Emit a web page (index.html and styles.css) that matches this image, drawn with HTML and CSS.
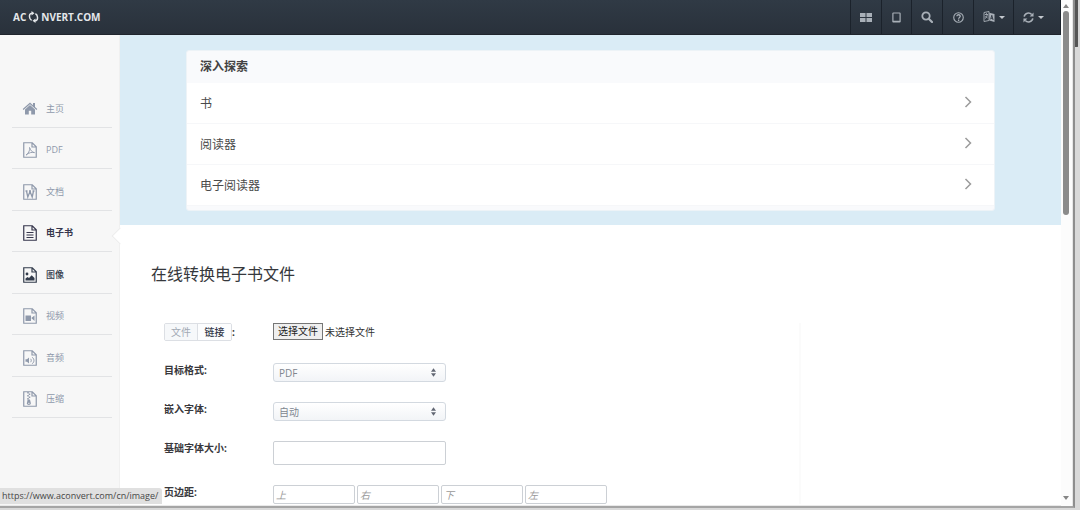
FILE: index.html
```html
<!DOCTYPE html>
<html lang="zh-CN">
<head>
<meta charset="utf-8">
<title>在线转换电子书文件</title>
<link rel="stylesheet" href="styles.css">
</head>
<body>
<svg class="defs" aria-hidden="true">
  <symbol id="page" viewBox="0 0 14 16"><path d="M.75.75h8.5l4 4v10.5H.75zM9 .75V5h4.25" fill="none" stroke="currentColor" stroke-width="1.2"/></symbol>
  <symbol id="chevron" viewBox="0 0 8 12"><path d="M1.500 1l5 5-5 5" fill="none" stroke="currentColor" stroke-width="1.5"/></symbol>
  <symbol id="updown" viewBox="0 0 6 10"><path d="M3 0l3 4H0zM0 6h6l-3 4z" fill="currentColor"/></symbol>
</svg>
<div class="window">
  <div class="view">
    <header class="topbar">
      <a class="logo" href="#" aria-label="ACONVERT.COM"><span>AC</span>
        <svg class="logo-icon" viewBox="0 0 12 12"><path d="M4.500 2.200C2.300 2.200 1.800 4 2 6c.2 1.600.9 2.700 2.100 3.400M7.500 9.800c2.200 0 2.700-1.800 2.500-3.800-.2-1.600-.9-2.700-2.100-3.400" fill="none" stroke="currentColor" stroke-width="1.500"/><path d="M4 0v4.400L7 2.200zM8 12V7.600L5 9.800z" fill="currentColor"/></svg>
        <span>NVERT.COM</span></a>
      <div class="tools">
        <button class="tool" aria-label="网格"><svg viewBox="0 0 12 10" width="12" height="10"><path d="M0 1h5.500v4H0zM6.500 1H12v4H6.500zM0 6h5.500v4H0zM6.500 6H12v4H6.500z" fill="currentColor"/></svg></button>
        <button class="tool narrow" aria-label="平板"><svg viewBox="0 0 10 12" width="9" height="11"><rect x="1" y="1" width="8" height="10" rx=".6" fill="none" stroke="currentColor" stroke-width="1.300"/><path d="M1 9.600h8v1.400H1z" fill="currentColor"/></svg></button>
        <button class="tool" aria-label="搜索"><svg viewBox="0 0 12 12" width="12" height="12"><circle cx="5" cy="5" r="3.700" fill="none" stroke="currentColor" stroke-width="1.800"/><path d="M7.700 7.700l3.300 3.300" stroke="currentColor" stroke-width="2.200" stroke-linecap="round"/></svg></button>
        <button class="tool" aria-label="帮助"><svg viewBox="0 0 12 12" width="11" height="11"><circle cx="6" cy="6" r="5.200" fill="none" stroke="currentColor" stroke-width="1.200"/><path d="M4.200 4.700c0-2.300 3.700-2.200 3.700 0C7.900 6 6.100 5.900 6.100 7.400M6.100 8.200v1.500" fill="none" stroke="currentColor" stroke-width="1.400"/></svg></button>
        <button class="tool wide" aria-label="语言"><svg viewBox="0 0 12 12" width="12" height="12"><path d="M1 1.500L6 .5v9L1 10.500zM2 3.500h3M3.500 2.200v1.300M2 7.500c1.500-.8 2-2 2.300-4M2.400 5l2.200 2.300" fill="none" stroke="currentColor" stroke-width=".9"/><path d="M6.300 1.800l5.200 1.300v8l-5.200-1.600z" fill="currentColor"/><path d="M7.600 8.300l1.200-4 1.300 4.700M8 7.200l1.700.3" fill="none" stroke="#2b343f" stroke-width=".9"/></svg><i class="caret"></i></button>
        <button class="tool widest" aria-label="刷新"><svg viewBox="0 0 12 12" width="11" height="11"><path d="M1.300 5C2 1 7 0 9.500 2.800M10.700 7C10 11 5 12 2.500 9.200" fill="none" stroke="currentColor" stroke-width="1.700"/><path d="M11.500.5v4.300H7.200zM.5 11.500V7.200h4.300z" fill="currentColor"/></svg><i class="caret"></i></button>
      </div>
    </header>
    <div class="layout">
      <nav class="sidebar">
        <a class="nav" href="#"><svg viewBox="0 0 16 14" class="nav-icon home"><path d="M8 1L.7 7.500l.8.9L8 2.700l6.500 5.700.8-.9-2.300-2.100V1.500h-2v2.200z" fill="currentColor"/><path d="M8 3.500l-5 4.400V13h3.800V9.200h2.400V13H13V7.900z" fill="currentColor"/></svg>主页</a>
        <a class="nav" href="#"><svg viewBox="0 0 14 16" class="nav-icon"><use href="#page"/><path d="M3 13c1.800-.6 4.400-5 3.500-7.500C8 9 9 10.200 11.500 10.600 9 10 6 10.500 3 13z" fill="none" stroke="currentColor" stroke-width=".9"/></svg>PDF</a>
        <a class="nav" href="#"><svg viewBox="0 0 14 16" class="nav-icon"><use href="#page"/><path d="M2.500 7h2M6 7h2M9.500 7h2M3.500 7l1.300 6L7 7.500 9.200 13l1.300-6" fill="none" stroke="currentColor" stroke-width="1.300"/></svg>文档</a>
        <a class="nav active" href="#"><svg viewBox="0 0 14 16" class="nav-icon"><use href="#page"/><path d="M3.500 7.500h7M3.500 10h7M3.500 12.500h7" stroke="currentColor" stroke-width="1.200"/></svg>电子书</a>
        <a class="nav hover" href="#"><svg viewBox="0 0 14 16" class="nav-icon"><use href="#page"/><circle cx="4" cy="7" r="1.400" fill="currentColor"/><path d="M2.500 13.500v-2L4.500 10l1.500 1L8.700 8.200l2.800 2.800v2.500z" fill="currentColor"/></svg>图像</a>
        <a class="nav" href="#"><svg viewBox="0 0 14 16" class="nav-icon"><use href="#page"/><path d="M2.500 7.500H8V13H2.500zM8.300 10l3.200-2.500V13z" fill="currentColor"/></svg>视频</a>
        <a class="nav" href="#"><svg viewBox="0 0 14 16" class="nav-icon"><use href="#page"/><path d="M2.500 9.300H4l2-1.800v6l-2-1.800H2.500z" fill="currentColor"/><path d="M7.500 8.800c1 1 1 2.400 0 3.400M9.300 7.300c2.200 2 2.200 4.400 0 6.400" fill="none" stroke="currentColor"/></svg>音频</a>
        <a class="nav" href="#"><svg viewBox="0 0 14 16" class="nav-icon"><use href="#page"/><path d="M5 1v1.500M6.500 2.500V4M5 4v1.500M6.500 5.500V7M5 7v1.500" stroke="currentColor" stroke-width="1.500"/><path d="M4.700 8.500h2.200l1 3.800c0 2.200-4.100 2.200-4.100 0z" fill="currentColor"/><path d="M5 12.300h1.600" stroke="#f7f7f7" stroke-width=".8"/></svg>压缩</a>
      </nav>
      <main class="main">
        <section class="promo">
          <div class="card">
            <h2 class="card-title">深入探索</h2>
            <a class="topic" href="#">书<svg class="chevron"><use href="#chevron"/></svg></a>
            <a class="topic" href="#">阅读器<svg class="chevron"><use href="#chevron"/></svg></a>
            <a class="topic" href="#">电子阅读器<svg class="chevron"><use href="#chevron"/></svg></a>
          </div>
        </section>
        <h1 class="title">在线转换电子书文件</h1>
        <form class="form">
          <div class="row source">
            <div class="source-label"><div class="segment"><button type="button" class="seg muted">文件</button><button type="button" class="seg">链接</button></div>:</div>
            <label class="file"><input class="file-input" type="file"><span class="file-button">选择文件</span><span>未选择文件</span></label>
          </div>
          <div class="row">
            <label class="label" for="format">目标格式:</label>
            <div class="select-wrap"><select id="format" class="select"><option>PDF</option></select><svg class="updown"><use href="#updown"/></svg></div>
          </div>
          <div class="row">
            <label class="label" for="fonts">嵌入字体:</label>
            <div class="select-wrap"><select id="fonts" class="select"><option>自动</option></select><svg class="updown"><use href="#updown"/></svg></div>
          </div>
          <div class="row">
            <label class="label" for="size">基础字体大小:</label>
            <input id="size" class="field" type="text">
          </div>
          <div class="row">
            <label class="label" for="top">页边距:</label>
            <div class="margins">
              <input id="top" class="field small" placeholder="上">
              <input class="field small" placeholder="右" aria-label="右">
              <input class="field small" placeholder="下" aria-label="下">
              <input class="field small" placeholder="左" aria-label="左">
            </div>
          </div>
        </form>
      </main>
    </div>
  </div>
  <div class="scrollbar"><i class="arrow up"></i><div class="track"><div class="thumb"></div></div><i class="arrow down"></i></div>
  <div class="status">https://www.aconvert.com/cn/image/</div>
</div>
<div class="behind"></div>
</body>
</html>
```
FILE: styles.css
```css
* { box-sizing: border-box; }
body {
  margin: 0;
  height: 100vh;
  display: grid;
  grid-template-columns: 1fr 5px;
  grid-template-rows: minmax(0, 1fr);
  overflow: hidden;
  padding-bottom: 2px;
  background: #d9d9d9;
  font: 10px/14px "Open Sans", "Noto Sans CJK SC", sans-serif;
  color: #333;
}
button, input, select { font: inherit; margin: 0; }
a { color: inherit; text-decoration: none; }
.defs { position: absolute; width: 0; height: 0; }
.window {
  position: relative;
  display: grid;
  grid-template-columns: 1fr 12px;
  grid-template-rows: minmax(0, 1fr);
  overflow: hidden;
  background: #fff;
  border-right: 2px solid #8e8e8e;
  border-bottom: 2px solid #a5a5a5;
}
.view { display: flex; flex-direction: column; min-height: 0; overflow: hidden; border-bottom: 1px solid #e9e9e9; }
.topbar {
  flex: none;
  display: flex;
  justify-content: space-between;
  height: 35px;
  background: linear-gradient(#303a45, #29313b);
  border-bottom: 1px solid #20252d;
  color: #a9b0b8;
}
.logo {
  display: flex;
  align-items: center;
  gap: 1px;
  padding-left: 13px;
  font-weight: 700;
  color: #e4e7ea;
}
.logo-icon { width: 13px; height: 12px; }
.tools { display: flex; border-right: 1px solid #1b222b; }
.tool {
  width: 31px;
  padding: 0;
  display: flex;
  align-items: center;
  justify-content: center;
  gap: 4px;
  background: none;
  border: 0;
  border-left: 1px solid #1b222b;
  color: inherit;
}
.narrow { width: 30px; }
.wide { width: 40px; }
.widest { width: 47px; padding-right: 8px; }
.caret { border: 3px solid transparent; border-top-color: #c3c8ce; border-bottom: 0; }
.layout { flex: 1; display: grid; grid-template-columns: 120px 1fr; min-height: 0; }
.sidebar {
  padding: 51px 0 0 12px;
  background: #f7f7f7;
  border-right: 1px solid #f0f0f0;
  font-size: 9px;
  color: #8f99ab;
}
.nav {
  position: relative;
  display: flex;
  align-items: center;
  gap: 8px;
  height: 41px;
  margin-right: 7px;
  padding: 4px 0 0 10px;
  border-bottom: 1px solid #e2e3e5;
}
.nav:nth-child(odd) { height: 42px; }
.nav-icon { width: 16px; height: 16px; }
.home { height: 15px; }
.active { font-weight: 700; color: #36364c; }
.active::after {
  content: "";
  position: absolute;
  right: -14px;
  top: 19px;
  width: 11px;
  height: 11px;
  background: #fff;
  border: 1px solid #ececec;
  border-width: 0 0 1px 1px;
  transform: rotate(45deg);
}
.hover { font-weight: 500; color: #333c4c; }
.main { min-width: 0; overflow: hidden; }
.promo { padding: 15px 66px 14px; background: #daecf6; }
.card {
  padding-bottom: 4px;
  background: #f9fafc;
  border: 1px solid #edf3f7;
  border-radius: 3px;
  overflow: hidden;
  font-size: 12px;
  line-height: 18px;
}
.card-title {
  margin: 0;
  padding: 7px 13px;
  font-size: 12px;
  color: #434343;
}
.topic {
  display: flex;
  align-items: center;
  justify-content: space-between;
  height: 41px;
  padding: 2px 22px 0 13px;
  background: #fff;
  border-bottom: 1px solid #f6f7f9;
  color: #4a4a4a;
}
.chevron { width: 8px; height: 12px; color: #9b9b9b; margin-bottom: 4px; }
.title {
  margin: 0;
  padding: 36px 31px;
  font-size: 16px;
  line-height: 26px;
  font-weight: 400;
  color: #36383c;
}
.form { display: flex; flex-direction: column; gap: 20px; margin-right: 260px; padding-left: 44px; border-right: 2px solid #fbfbfb; }
.row { display: grid; grid-template-columns: 109px 1fr; align-items: start; }
.source { margin-bottom: 2px; }
.label { font-weight: 700; color: #38383c; }
.source-label { display: flex; align-items: center; font-weight: 700; }
.segment {
  display: flex;
  height: 18px;
  border: 1px solid #dcdfe4;
  border-radius: 2px;
  overflow: hidden;
}
.seg {
  width: 33px;
  padding: 0;
  border: 0;
  background: #fcfdfe;
  line-height: 14px;
  font-weight: 500;
  color: #33394a;
}
.muted { border-right: 1px solid #dcdfe4; background: #f6f8fa; color: #a2a9b4; font-weight: 400; }
.file { display: flex; align-items: center; gap: 2px; }
.file-input { position: absolute; width: 1px; height: 1px; opacity: 0; }
.file-button {
  padding: 0 4px;
  border: 1px solid #767676;
  background: #efefef;
  line-height: 15px;
  color: #222;
}
.select-wrap { position: relative; width: 173px; height: 19px; }
.select {
  display: block;
  width: 100%;
  height: 19px;
  padding: 0 5px;
  appearance: none;
  border: 1px solid #d3d9e0;
  border-radius: 3px;
  background: linear-gradient(#fff, #f2f4f7);
  color: #80868f;
}
.updown { position: absolute; right: 10px; top: 5px; width: 5px; height: 9px; color: #626773; }
.field {
  width: 173px;
  height: 24px;
  padding: 0 3px;
  background: #fff;
  border: 1px solid #ccd0d5;
  border-radius: 2px;
}
.field::placeholder { color: #999; font-style: italic; opacity: 1; }
.margins { display: flex; gap: 2px; }
.small { width: 82px; height: 19px; padding: 0 2px; }
.scrollbar { display: flex; flex-direction: column; align-items: center; padding: 4px 2px 6px 0; background: #fcfcfc; border-right: 1px solid #e6e6e6; }
.arrow { border: 3px solid transparent; }
.up { border-bottom: 4px solid #858585; border-top: 0; }
.down { border-top: 4px solid #858585; border-bottom: 0; }
.track { flex: 1; padding-top: 3px; }
.thumb { width: 6px; height: 42%; border-radius: 3px; background: #8b8b8b; }
.status {
  position: absolute;
  left: 0;
  bottom: 2px;
  padding: 1px 4px 1px 2px;
  background: #e0e0e0;
  border-radius: 0 3px 0 0;
  font-size: 9px;
  line-height: 14px;
  color: #474747;
}
.behind { height: 47px; background: linear-gradient(90deg, #555 3px, #d6d6d6 3px); border-radius: 0 0 3px 0; }
```
